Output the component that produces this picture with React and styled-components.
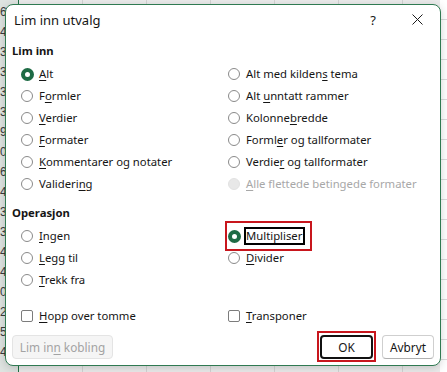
import React from 'react'
import styled, { createGlobalStyle, css } from 'styled-components'

const GlobalStyle = createGlobalStyle`
  html, body {
    margin: 0;
    padding: 0;
  }
  body {
    font-family: "Noto Sans", "Segoe UI", sans-serif;
    color: #151515;
  }
  * {
    box-sizing: border-box;
  }
`

const pasteOptions = [
  { label: '&Alt', checked: true },
  { label: 'F&ormler' },
  { label: '&Verdier' },
  { label: '&Formater' },
  { label: '&Kommentarer og notater' },
  { label: 'Valideri&ng' },
  { label: 'Alt med kilden&s tema' },
  { label: 'Alt &unntatt rammer' },
  { label: 'Kolonne&bredde' },
  { label: 'Forml&er og tallformater' },
  { label: 'Verdie&r og tallformater' },
  { label: '&Alle flettede betingede formater', disabled: true },
]

const operationOptions = [
  { label: '&Ingen' },
  { label: '&Legg til' },
  { label: '&Trekk fra' },
  { label: 'Multipliser', checked: true, focused: true, marked: true },
  { label: '&Divider' },
]

const rowNumbers = [6, 4, 3, 3, 3, 3, 9, 0, 6, 4, 3, 3, 4, 4, 0, 2, 5, 4]

// "&" foran bokstaven som skal understrekes
const renderLabel = (text) => {
  const i = text.indexOf('&')
  if (i < 0) return text
  return (
    <>
      {text.slice(0, i)}
      <Key>{text[i + 1]}</Key>
      {text.slice(i + 2)}
    </>
  )
}

function App() {
  return (
    <>
      <GlobalStyle />
      <Sheet>
        <RowHeaders>
          {rowNumbers.map((n, i) => (
            <RowNum key={i}>{n}</RowNum>
          ))}
        </RowHeaders>
        <Cells />
        <CellsRest />

        <Dialog>
          <TitleBar>
            <Title>Lim inn utvalg</Title>
            <HelpButton>?</HelpButton>
            <CloseButton>
              <svg width='11' height='11' viewBox='0 0 11 11'>
                <path d='M0.5 0.5 L10.5 10.5 M10.5 0.5 L0.5 10.5' stroke='#1b1b1b' strokeWidth='1' fill='none' />
              </svg>
            </CloseButton>
          </TitleBar>

          <Body>
            <Heading>Lim inn</Heading>
            <OptionGrid $rows={6}>
              {pasteOptions.map((o) => (
                <Option key={o.label} $disabled={o.disabled}>
                  <Radio $checked={o.checked} $disabled={o.disabled} />
                  <Label>{renderLabel(o.label)}</Label>
                </Option>
              ))}
            </OptionGrid>

            <Heading $gap={10}>Operasjon</Heading>
            <OptionGrid $rows={3}>
              {operationOptions.map((o) => (
                <Option key={o.label} $marked={o.marked}>
                  <Radio $checked={o.checked} />
                  <Label $focused={o.focused}>{renderLabel(o.label)}</Label>
                </Option>
              ))}
            </OptionGrid>

            <OptionGrid $rows={1} $gap={14}>
              <Option>
                <Checkbox />
                <Label>{renderLabel('&Hopp over tomme')}</Label>
              </Option>
              <Option>
                <Checkbox />
                <Label>{renderLabel('&Transponer')}</Label>
              </Option>
            </OptionGrid>

            <Footer>
              <Button $disabled>
                <Label>{renderLabel('Lim in&n kobling')}</Label>
              </Button>
              <Button $primary $marked>OK</Button>
              <Button>Avbryt</Button>
            </Footer>
          </Body>
        </Dialog>
      </Sheet>
    </>
  )
}

export default App

const Sheet = styled.div`
  position: relative;
  width: 447px;
  height: 372px;
  overflow: hidden;
  display: flex;
  background: #fff;
`

const RowHeaders = styled.div`
  flex: none;
  width: 19px;
  background: #dfe4e1;
  border-right: 1px solid #217346;
  display: flex;
  flex-direction: column;
  padding-top: 2px;
`

const RowNum = styled.div`
  height: 20px;
  font-family: "Liberation Sans", Arial, sans-serif;
  font-size: 12px;
  line-height: 20px;
  color: #3a3a3a;
`

const gridLines = css`
  background-image:
    repeating-linear-gradient(to right, transparent 0 63px, #d4d4d4 63px 64px),
    repeating-linear-gradient(to bottom, transparent 0 19px, #dcdcdc 19px 20px);
`

const Cells = styled.div`
  flex: 1;
  background-color: #ececec;
  ${gridLines}
`

const CellsRest = styled.div`
  flex: none;
  width: 7px;
  background-color: #fff;
  ${gridLines}
`

const Dialog = styled.div`
  position: absolute;
  left: 5px;
  top: 4px;
  width: 436px;
  height: 362px;
  background: #fff;
  border: 1px solid #2f7a52;
  border-radius: 8px;
  box-shadow: 0 2px 10px rgba(0, 0, 0, 0.18);
  display: flex;
  flex-direction: column;
`

const TitleBar = styled.div`
  height: 29px;
  display: flex;
  align-items: center;
  padding-left: 8px;
  font-size: 13px;
`

const Title = styled.div`
  flex: 1;
`

const HelpButton = styled.div`
  width: 42px;
  text-align: center;
  font-size: 13px;
`

const CloseButton = styled.div`
  width: 46px;
  height: 29px;
  display: flex;
  align-items: center;
  justify-content: center;
  border-top-right-radius: 7px;
`

const Body = styled.div`
  display: flex;
  flex-direction: column;
  padding: 0 6px 6px 6px;
  font-size: 11.3px;
`

const Heading = styled.div`
  margin-top: ${(p) => (p.$gap ?? 9)}px;
  height: 16px;
  line-height: 16px;
  font-weight: 700;
`

const OptionGrid = styled.div`
  margin-top: ${(p) => (p.$gap ?? 4)}px;
  padding-left: 9px;
  display: grid;
  grid-template-columns: 207px auto;
  grid-template-rows: repeat(${(p) => p.$rows}, 22px);
  grid-auto-flow: column;
`

const Option = styled.div`
  position: relative;
  justify-self: start;
  display: flex;
  align-items: center;
  gap: 6px;
  height: 22px;
  color: ${(p) => (p.$disabled ? '#a8a8a8' : '#151515')};
  ${(p) =>
    p.$marked &&
    css`
      &::after {
        content: '';
        position: absolute;
        left: -3px;
        right: -7px;
        top: -4px;
        bottom: -4px;
        border: 2px solid #c8161d;
      }
    `}
`

const Radio = styled.span`
  flex: none;
  width: 12px;
  height: 12px;
  border-radius: 50%;
  border: 1px solid #8a8a8a;
  background: #fff;
  ${(p) =>
    p.$checked &&
    css`
      width: 13px;
      height: 13px;
      margin-left: -0.5px;
      margin-right: -0.5px;
      border: 4px solid #1e6b45;
    `}
  ${(p) =>
    p.$disabled &&
    css`
      border-color: #e2e2e2;
      background: #e8e8e8;
    `}
`

const Checkbox = styled.span`
  flex: none;
  width: 12px;
  height: 12px;
  border: 1px solid #7c7c7c;
  border-radius: 2px;
  background: #fff;
`

const Label = styled.span`
  line-height: 16px;
  white-space: nowrap;
  ${(p) =>
    p.$focused &&
    css`
      margin-left: -2px;
      padding: 0 1px 0 0;
      border: 2px solid #000;
      line-height: 14px;
    `}
`

const Key = styled.span`
  text-decoration: underline;
  text-underline-offset: 2px;
`

const Footer = styled.div`
  margin-top: 8px;
  display: flex;
  gap: 9px;
`

const Button = styled.div`
  position: relative;
  height: 24px;
  width: 52px;
  display: flex;
  align-items: center;
  justify-content: center;
  border-radius: 4px;
  border: 1px solid #cfcfcf;
  border-bottom-color: #b0b0b0;
  background: #fff;
  color: #151515;
  font-size: 11.8px;
  ${(p) =>
    p.$disabled &&
    css`
      width: 101px;
      background: #f5f5f5;
      border-color: #e4e4e4;
      color: #a3a3a3;
      margin-right: auto;
    `}
  ${(p) =>
    p.$primary &&
    css`
      width: 53px;
      border: 2px solid #111;
    `}
  ${(p) =>
    p.$marked &&
    css`
      &::after {
        content: '';
        position: absolute;
        left: -5px;
        right: -5px;
        top: -6px;
        bottom: -5px;
        border: 2px solid #c8161d;
      }
    `}
`
